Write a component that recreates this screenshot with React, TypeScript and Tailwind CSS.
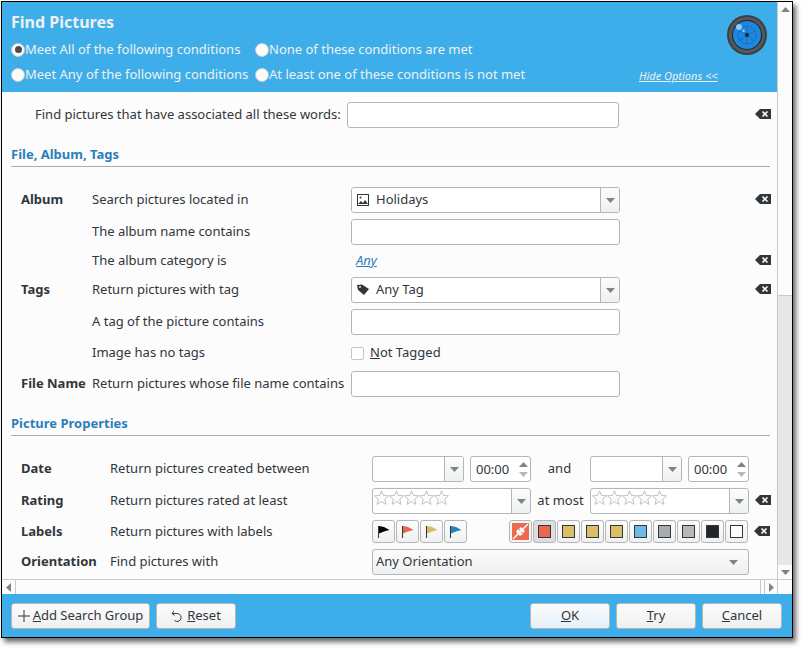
import React from "react";

const font = { fontFamily: '"Noto Sans", sans-serif' };

function Clear() {
  return (
    <svg width="16" height="12" viewBox="0 0 16 12" className="block mb-[2px]">
      <path d="M0 6 L5 1 H16 V11 H5 Z" fill="#31363b" />
      <path d="M7.5 3.5 L12.5 8.5 M12.5 3.5 L7.5 8.5" stroke="#fcfcfc" strokeWidth="1.6" />
    </svg>
  );
}

function Caret({ up = false, light = false }: { up?: boolean; light?: boolean }) {
  return (
    <svg width="9" height="5" viewBox="0 0 9 5" className="block">
      <path d={up ? "M4.5 0 L9 5 H0 Z" : "M0 0 H9 L4.5 5 Z"} fill={light ? "#b5b7b9" : "#7e8385"} />
    </svg>
  );
}

function Input({ w = "w-[269px]", h = "h-[26px]" }: { w?: string; h?: string }) {
  return <div className={`${w} ${h} shrink-0 bg-white border border-[#b3b5b7] rounded-[3px]`} />;
}

function Combo({
  w,
  icon,
  text,
  children,
}: {
  w: string;
  icon?: React.ReactNode;
  text?: string;
  children?: React.ReactNode;
}) {
  return (
    <div className={`${w} h-[26px] shrink-0 flex bg-white border border-[#b3b5b7] rounded-[3px] overflow-hidden`}>
      <div className="flex-1 min-w-0 flex items-center pl-[5px] gap-[7px] text-[13px] text-[#31363b]">
        {icon}
        {text}
        {children}
      </div>
      <div className="w-[19px] shrink-0 border-l border-[#b3b5b7] bg-gradient-to-b from-[#fcfcfc] to-[#eff0f1] flex items-center justify-center">
        <Caret />
      </div>
    </div>
  );
}

function Spin() {
  return (
    <div className="w-[61px] h-[26px] shrink-0 flex bg-white border border-[#b3b5b7] rounded-[3px] text-[13px] text-[#31363b]">
      <div className="flex-1 pl-[5px] leading-[24px]">00:00</div>
      <div className="w-[13px] flex flex-col items-center justify-center gap-[5px]">
        <Caret up />
        <Caret light />
      </div>
    </div>
  );
}

function Stars() {
  return (
    <svg width="76" height="16" viewBox="0 0 76 16" className="block self-start mt-px -ml-[4px]">
      {[0, 15, 30, 45, 60].map((x) => (
        <path
          key={x}
          transform={`translate(${x} 0)`}
          d="M7.5 0.8 L9.4 5.4 L14.6 5.8 L10.7 9.2 L12 14.4 L7.5 11.6 L3 14.4 L4.3 9.2 L0.4 5.8 L5.6 5.4 Z"
          fill="#fcfcfc"
          stroke="#bdc3c7"
        />
      ))}
    </svg>
  );
}

function Flag({ color }: { color: string }) {
  return (
    <div className="w-[23px] h-[23px] border border-[#b3b5b7] rounded-[3px] bg-gradient-to-b from-[#fcfcfc] to-[#eff0f1] flex items-center justify-center">
      <svg width="14" height="14" viewBox="0 0 14 14" className="block">
        <path d="M1.5 1 V13" stroke="#31363b" strokeWidth="1" />
        <path d="M2 1 L7 2 L12.5 5 L7 6.5 L2 8.5 Z" fill={color} />
      </svg>
    </div>
  );
}

function Swatch({ color, active = false }: { color: string; active?: boolean }) {
  return (
    <div
      className={`w-[23px] h-[23px] border border-[#b3b5b7] rounded-[3px] flex items-center justify-center ${
        active ? "bg-[#dcdde0]" : "bg-gradient-to-b from-[#fcfcfc] to-[#eff0f1]"
      }`}
    >
      <div className="w-[13px] h-[13px] border border-[#31363b]" style={{ backgroundColor: color }} />
    </div>
  );
}

function Btn({ w, children, faint = false }: { w: string; children: React.ReactNode; faint?: boolean }) {
  return (
    <div
      className={`${w} h-[26px] flex items-center justify-center border border-[#b3b5b7] rounded-[3px] text-[13px] text-[#31363b] bg-gradient-to-b ${
        faint ? "from-[#fcfcfc] to-[#e3eff7]" : "from-[#fcfcfc] to-[#eff0f1]"
      }`}
    >
      {children}
    </div>
  );
}

function Row1({
  h,
  mb = "",
  head,
  label,
  children,
  clear = false,
}: {
  h: string;
  mb?: string;
  head?: string;
  label: string;
  children: React.ReactNode;
  clear?: boolean;
}) {
  return (
    <div className={`flex items-center ${h} ${mb}`}>
      <div className="w-[90px] pl-[19px] shrink-0 font-bold">{head}</div>
      <div className="w-[259px] shrink-0 whitespace-nowrap">{label}</div>
      <div className="w-[404px] shrink-0 flex items-center">{children}</div>
      {clear && <Clear />}
    </div>
  );
}

function Row2({
  h,
  mb = "",
  head,
  label,
  children,
}: {
  h: string;
  mb?: string;
  head: string;
  label: string;
  children: React.ReactNode;
}) {
  return (
    <div className={`flex items-center ${h} ${mb}`}>
      <div className="w-[108px] pl-[19px] shrink-0 font-bold">{head}</div>
      <div className="w-[262px] shrink-0 whitespace-nowrap">{label}</div>
      <div className="flex items-center">{children}</div>
    </div>
  );
}

function Section({ title }: { title: string }) {
  return (
    <div className="ml-[9px] w-[759px] border-b border-[#a9abad] h-[25px] text-[#2980b9] font-bold text-[13px] leading-[24px]">
      {title}
    </div>
  );
}

function Radio({ label, checked = false, w }: { label: string; checked?: boolean; w: string }) {
  return (
    <div className={`flex items-center ${w}`}>
      <div className="w-[14px] h-[14px] rounded-full bg-[#fcfcfc] border border-[#c8cbcd] flex items-center justify-center shrink-0">
        {checked && <div className="w-[7px] h-[7px] rounded-full bg-[#4d4d4d]" />}
      </div>
      <span className="whitespace-nowrap">{label}</span>
    </div>
  );
}

function Lens() {
  return (
    <svg width="42" height="42" viewBox="0 0 42 42" className="block">
      <circle cx="21" cy="21" r="20" fill="#3c4043" />
      <circle cx="21" cy="21" r="18" fill="#54585b" />
      <circle cx="21" cy="21" r="15" fill="#1d232a" />
      <circle cx="21" cy="21" r="14" fill="#1e88e0" />
      <g stroke="#1a6fb8" strokeWidth="1" fill="none">
        <circle cx="21" cy="21" r="9" />
        <path d="M21 21 L21 12 M21 21 L29 17 M21 21 L28 27 M21 21 L21 30 M21 21 L13 27 M21 21 L13 16" />
      </g>
      <circle cx="21" cy="21" r="2" fill="#1d232a" />
      <circle cx="13" cy="13" r="3" fill="#8fcdf5" />
      <circle cx="17.5" cy="17" r="1.2" fill="#8fcdf5" />
    </svg>
  );
}

export default function App() {
  return (
    <div className="w-[803px] h-[649px] bg-white overflow-hidden" style={font}>
      <div className="ml-px mt-px w-[792px] h-[637px] border border-black bg-[#3daee9] flex flex-col shadow-[3px_4px_5px_rgba(0,0,0,0.6)] text-[13px] text-[#31363b]">
        <div className="flex flex-1 min-h-0">
          <div className="w-[775px] shrink-0 flex flex-col">
            {/* header */}
            <div className="h-[90px] shrink-0 bg-[#3daee9] text-[#eff0f1] relative pl-[9px] pt-[9px]">
              <div className="text-[16px] font-bold leading-[22px]">Find Pictures</div>
              <div className="flex mt-[4px] leading-[25px] h-[25px]">
                <Radio checked w="w-[244px]" label="Meet All of the following conditions" />
                <Radio w="w-[300px]" label="None of these conditions are met" />
              </div>
              <div className="flex leading-[25px] h-[25px]">
                <Radio w="w-[244px]" label="Meet Any of the following conditions" />
                <Radio w="w-[300px]" label="At least one of these conditions is not met" />
              </div>
              <div className="absolute left-[724px] top-[12px]">
                <Lens />
              </div>
              <div className="absolute left-[637px] top-[67px] text-[11px] italic underline leading-[14px]">
                Hide Options &lt;&lt;
              </div>
            </div>
            {/* form */}
            <div className="flex-1 min-h-0 bg-[#fcfcfc] overflow-hidden">
              <div className="flex items-center h-[26px] mt-[10px] mb-[14px]">
                <div className="pl-[33px] w-[345px] shrink-0">Find pictures that have associated all these words:</div>
                <Input w="w-[272px]" />
                <div className="ml-[136px]">
                  <Clear />
                </div>
              </div>
              <Section title="File, Album, Tags" />
              <div className="h-[20px]" />
              <Row1 h="h-[26px]" mb="mb-[6px]" head="Album" label="Search pictures located in" clear>
                <Combo
                  w="w-[269px]"
                  text="Holidays"
                  icon={
                    <svg width="12" height="12" viewBox="0 0 12 12" className="block">
                      <rect x="0.5" y="0.5" width="11" height="11" fill="none" stroke="#31363b" />
                      <circle cx="3.5" cy="3.5" r="1" fill="#31363b" />
                      <path d="M1 10 L4 7 L6 9 L8 6 L11 10 Z" fill="#31363b" />
                    </svg>
                  }
                />
              </Row1>
              <Row1 h="h-[26px]" mb="mb-[3px]" label="The album name contains">
                <Input />
              </Row1>
              <Row1 h="h-[26px]" mb="mb-[3px]" label="The album category is" clear>
                <span className="ml-[5px] italic underline text-[#2980b9] text-[13px]">Any</span>
              </Row1>
              <Row1 h="h-[26px]" mb="mb-[6px]" head="Tags" label="Return pictures with tag" clear>
                <Combo
                  w="w-[269px]"
                  text="Any Tag"
                  icon={
                    <svg width="12" height="12" viewBox="0 0 12 12" className="block">
                      <path d="M0 1 L5 0.5 L12 5 L7 11 L1 6 Z" fill="#31363b" />
                      <circle cx="3" cy="3" r="0.9" fill="#fcfcfc" />
                    </svg>
                  }
                />
              </Row1>
              <Row1 h="h-[26px]" mb="mb-[5px]" label="A tag of the picture contains">
                <Input />
              </Row1>
              <Row1 h="h-[26px]" mb="mb-[5px]" label="Image has no tags">
                <div className="w-[13px] h-[13px] border border-[#c4c6c8] bg-white rounded-[2px] mr-[6px]" />
                <span>
                  <span className="underline">N</span>ot Tagged
                </span>
              </Row1>
              <div className="flex items-center h-[26px] mb-[14px]">
                <div className="pl-[19px] w-[90px] shrink-0 font-bold whitespace-nowrap">File Name</div>
                <div className="w-[259px] shrink-0 whitespace-nowrap">Return pictures whose file name contains</div>
                <Input />
              </div>
              <Section title="Picture Properties" />
              <div className="h-[20px]" />
              <Row2 h="h-[26px]" mb="mb-[6px]" head="Date" label="Return pictures created between">
                <Combo w="w-[92px]" />
                <div className="w-[6px]" />
                <Spin />
                <div className="w-[59px] text-center pr-[2px]">and</div>
                <Combo w="w-[92px]" />
                <div className="w-[6px]" />
                <Spin />
              </Row2>
              <Row2 h="h-[26px]" mb="mb-[5px]" head="Rating" label="Return pictures rated at least">
                <Combo w="w-[159px]">
                  <Stars />
                </Combo>
                <div className="w-[59px] text-center whitespace-nowrap">at most</div>
                <Combo w="w-[159px]">
                  <Stars />
                </Combo>
                <div className="ml-[6px]">
                  <Clear />
                </div>
              </Row2>
              <Row2 h="h-[25px]" mb="mb-[5px]" head="Labels" label="Return pictures with labels">
                <div className="flex gap-px w-[137px]">
                  <Flag color="#000000" />
                  <Flag color="#e9674f" />
                  <Flag color="#d8b964" />
                  <Flag color="#2980b9" />
                </div>
                <div className="flex gap-px">
                  <div className="w-[23px] h-[23px] border border-[#b3b5b7] rounded-[3px] bg-[#f4f5f5] flex items-center justify-center">
                    <svg width="17" height="17" viewBox="0 0 17 17" className="block">
                      <rect width="17" height="17" fill="#ed6a50" />
                      <path d="M1 16 L16 1" stroke="#fcfcfc" strokeWidth="1.5" />
                      <path d="M6 6 L11 11 L8 13 L4 9 Z M9 4 L13 8 L11 10 L7 6 Z" fill="#fcfcfc" />
                    </svg>
                  </div>
                  <Swatch color="#e9674f" active />
                  <Swatch color="#dcbd68" />
                  <Swatch color="#dcbd68" />
                  <Swatch color="#dcbd68" />
                  <Swatch color="#6cb9ea" />
                  <Swatch color="#a9abad" />
                  <Swatch color="#b5b7b8" />
                  <Swatch color="#232629" />
                  <Swatch color="#fcfcfc" />
                </div>
                <div className="ml-[6px]">
                  <Clear />
                </div>
              </Row2>
              <Row2 h="h-[26px]" head="Orientation" label="Find pictures with">
                <div className="w-[377px] h-[26px] flex items-center justify-between pl-[3px] pr-[10px] border border-[#b3b5b7] rounded-[3px] bg-gradient-to-b from-[#fcfcfc] to-[#eff0f1]">
                  <span>Any Orientation</span>
                  <Caret />
                </div>
              </Row2>
            </div>
            {/* horizontal scrollbar */}
            <div className="h-[15px] shrink-0 flex bg-[#fcfcfc] border-t border-[#c8cacc]">
              <div className="w-[14px] border-r border-[#c8cacc] flex items-center justify-center">
                <svg width="5" height="9" viewBox="0 0 5 9" className="block">
                  <path d="M5 0 V9 L0 4.5 Z" fill="#7e8385" />
                </svg>
              </div>
              <div className="flex-1" />
              <div className="w-[17px] border-l border-[#c8cacc] flex pl-[3px]">
                <div className="flex-1 border-l border-[#c8cacc] flex items-center justify-center">
                  <svg width="5" height="9" viewBox="0 0 5 9" className="block">
                    <path d="M0 0 V9 L5 4.5 Z" fill="#7e8385" />
                  </svg>
                </div>
              </div>
            </div>
          </div>
          {/* vertical scrollbar */}
          <div className="flex-1 flex flex-col border-l border-[#c8cacc] bg-[#e6e7e9]">
            <div className="h-[14px] bg-[#fcfcfc] flex items-center justify-center">
              <Caret up />
            </div>
            <div className="h-[280px] bg-[#fcfcfc] border-b border-[#c8cacc]" />
            <div className="flex-1" />
            <div className="h-[14px] bg-[#fcfcfc] flex items-center justify-center">
              <Caret />
            </div>
            <div className="h-[15px] bg-[#fcfcfc] border-t border-[#c8cacc]" />
          </div>
        </div>
        {/* footer */}
        <div className="h-[43px] shrink-0 flex items-center pl-[9px] pr-[10px] pt-[1px]">
          <Btn w="w-[139px]">
            <span className="flex items-center gap-[3px]">
              <svg width="12" height="12" viewBox="0 0 12 12" className="block">
                <path d="M6 0 V12 M0 6 H12" stroke="#31363b" strokeWidth="1" />
              </svg>
              <span>
                <span className="underline">A</span>dd Search Group
              </span>
            </span>
          </Btn>
          <div className="w-[6px]" />
          <Btn w="w-[80px]">
            <span className="flex items-center gap-[4px]">
              <svg width="12" height="12" viewBox="0 0 12 12" className="block" fill="none" stroke="#31363b">
                <path d="M3 1 L1 3.5 L3.5 5.5 M1.5 3.5 H6.5 A4 4 0 1 1 3.5 10.5" />
              </svg>
              <span>
                <span className="underline">R</span>eset
              </span>
            </span>
          </Btn>
          <div className="flex-1" />
          <Btn w="w-[80px]" faint>
            <span>
              <span className="underline">O</span>K
            </span>
          </Btn>
          <div className="w-[6px]" />
          <Btn w="w-[80px]">
            <span>
              <span className="underline">T</span>ry
            </span>
          </Btn>
          <div className="w-[6px]" />
          <Btn w="w-[80px]">
            <span>
              <span className="underline">C</span>ancel
            </span>
          </Btn>
        </div>
      </div>
    </div>
  );
}
